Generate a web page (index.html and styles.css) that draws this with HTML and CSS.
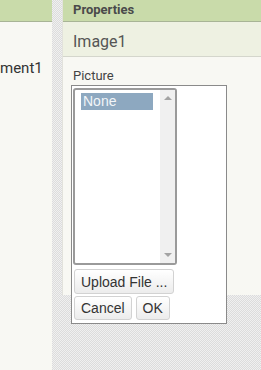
FILE: index.html
```html
<!DOCTYPE html>
<html lang="en">
<head>
    <meta charset="UTF-8">
    <title>Properties</title>
    <link rel="stylesheet" href="styles.css">
</head>
<body>
    <div class="layout">
        <div class="tree-panel">
            <div class="panel-header"></div>
            <div class="tree-item">ment1</div>
        </div>
        <div class="splitter"></div>
        <div class="props-panel">
            <div class="panel-header props-title">Properties</div>
            <div class="component-name">Image1</div>
            <div class="prop-label">Picture</div>

            <div class="picker-popup">
                <div class="asset-list">
                    <div class="asset-items">
                        <div class="asset-option selected">None</div>
                    </div>
                    <div class="scrollbar">
                        <span class="arrow up"></span>
                        <span class="arrow down"></span>
                    </div>
                </div>
                <div class="picker-actions">
                    <button class="btn">Upload File ...</button>
                    <div class="btn-row">
                        <button class="btn">Cancel</button>
                        <button class="btn">OK</button>
                    </div>
                </div>
            </div>
        </div>
    </div>
</body>
</html>
```

FILE: styles.css
```css
* {
    margin: 0;
    padding: 0;
    box-sizing: border-box;
}

body {
    font-family: Roboto, "Liberation Sans", sans-serif;
    height: 370px;
    overflow: hidden;
    background-color: #e8e8e8;
    background-image: repeating-conic-gradient(#dcdcdc 0 25%, #f0f0f0 0 50%);
    background-size: 2px 2px;
}

.layout {
    display: flex;
    align-items: flex-start;
    height: 370px;
}

.tree-panel {
    width: 52px;
    height: 370px;
    background-color: #f8f8f3;
    overflow: hidden;
}

.panel-header {
    height: 22px;
    background-color: #c9dbaa;
    border-bottom: 1px solid #a8b496;
}

.tree-item {
    margin-top: 37px;
    font-size: 15px;
    color: #333;
    white-space: nowrap;
}

.splitter {
    width: 10px;
    height: 370px;
}

.props-panel {
    position: relative;
    flex: 1;
    height: 295px;
    background-color: #f8f8f3;
    border-left: 1px solid #e2e2dc;
}

.props-title {
    padding: 2px 0 0 10px;
    font-size: 13px;
    font-weight: bold;
    color: #4a4a4a;
}

.component-name {
    height: 35px;
    padding: 10px 0 0 10px;
    background-color: #eef1e2;
    border-bottom: 1px solid #d4d6cc;
    font-size: 16px;
    color: #555;
}

.prop-label {
    padding: 11px 0 0 10px;
    font-size: 13px;
    color: #444;
}

.picker-popup {
    position: absolute;
    left: 8px;
    top: 85px;
    width: 156px;
    height: 239px;
    padding: 2px 0 0 1px;
    background-color: white;
    border: 1px solid #8a8a8a;
}

.asset-list {
    display: flex;
    width: 104px;
    height: 177px;
    border: 2px solid #9a9a9a;
    border-radius: 3px;
    background-color: white;
}

.asset-items {
    flex: 1;
    padding: 3px 0 0 6px;
}

.asset-option {
    width: 72px;
    height: 17px;
    padding-left: 2px;
    font-family: "Liberation Sans", Arial, sans-serif;
    font-size: 14px;
    line-height: 17px;
    color: #f2f5f8;
}

.asset-option.selected {
    background-color: #8da8c0;
}

.scrollbar {
    width: 15px;
    background-color: #f0f0f0;
    display: flex;
    flex-direction: column;
    justify-content: space-between;
    align-items: center;
    padding: 6px 0 6px;
}

.arrow {
    width: 0;
    height: 0;
    border-left: 4px solid transparent;
    border-right: 4px solid transparent;
}

.arrow.up {
    border-bottom: 4px solid #a3a3a3;
}

.arrow.down {
    border-top: 4px solid #a3a3a3;
}

.picker-actions {
    display: flex;
    flex-direction: column;
    align-items: flex-start;
    gap: 2px;
    padding: 4px 0 0 1px;
}

.btn-row {
    display: flex;
    gap: 4px;
}

.btn {
    height: 25px;
    padding: 0 6px;
    font-family: "Liberation Sans", Arial, sans-serif;
    font-size: 14px;
    color: #333;
    background: linear-gradient(#ffffff, #ececec);
    border: 1px solid #d2d2d2;
    border-radius: 3px;
    cursor: pointer;
}

.btn-row .btn {
    height: 24px;
}
```
